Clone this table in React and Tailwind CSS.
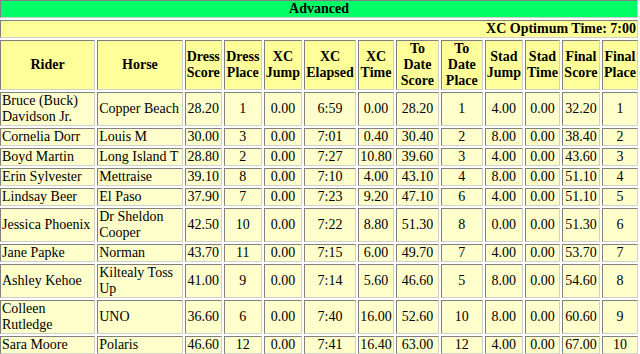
import React from 'react'

const cols = [
  { label: ['Rider'], w: 'w-[96px]', align: 'text-left' },
  { label: ['Horse'], w: 'w-[86px]', align: 'text-left' },
  { label: ['Dress', 'Score'], w: 'w-[37px]' },
  { label: ['Dress', 'Place'], w: 'w-[38px]' },
  { label: ['XC', 'Jump'], w: 'w-[38px]' },
  { label: ['XC', 'Elapsed'], w: 'w-[52px]' },
  { label: ['XC', 'Time'], w: 'w-[36px]' },
  { label: ['To', 'Date', 'Score'], w: 'w-[43px]' },
  { label: ['To', 'Date', 'Place'], w: 'w-[42px]' },
  { label: ['Stad', 'Jump'], w: 'w-[38px]' },
  { label: ['Stad', 'Time'], w: 'w-[35px]' },
  { label: ['Final', 'Score'], w: 'w-[38px]' },
  { label: ['Final', 'Place'], w: 'w-[36px]' },
]

const rows = [
  ['Bruce (Buck) Davidson Jr.', 'Copper Beach', '28.20', '1', '0.00', '6:59', '0.00', '28.20', '1', '4.00', '0.00', '32.20', '1'],
  ['Cornelia Dorr', 'Louis M', '30.00', '3', '0.00', '7:01', '0.40', '30.40', '2', '8.00', '0.00', '38.40', '2'],
  ['Boyd Martin', 'Long Island T', '28.80', '2', '0.00', '7:27', '10.80', '39.60', '3', '4.00', '0.00', '43.60', '3'],
  ['Erin Sylvester', 'Mettraise', '39.10', '8', '0.00', '7:10', '4.00', '43.10', '4', '8.00', '0.00', '51.10', '4'],
  ['Lindsay Beer', 'El Paso', '37.90', '7', '0.00', '7:23', '9.20', '47.10', '6', '4.00', '0.00', '51.10', '5'],
  ['Jessica Phoenix', 'Dr Sheldon Cooper', '42.50', '10', '0.00', '7:22', '8.80', '51.30', '8', '0.00', '0.00', '51.30', '6'],
  ['Jane Papke', 'Norman', '43.70', '11', '0.00', '7:15', '6.00', '49.70', '7', '4.00', '0.00', '53.70', '7'],
  ['Ashley Kehoe', 'Kiltealy Toss Up', '41.00', '9', '0.00', '7:14', '5.60', '46.60', '5', '8.00', '0.00', '54.60', '8'],
  ['Colleen Rutledge', 'UNO', '36.60', '6', '0.00', '7:40', '16.00', '52.60', '10', '8.00', '0.00', '60.60', '9'],
  ['Sara Moore', 'Polaris', '46.60', '12', '0.00', '7:41', '16.40', '63.00', '12', '4.00', '0.00', '67.00', '10'],
]

// old-school table border=1 look: dark top/left, light bottom/right
const cell = 'border border-t-[#808080] border-l-[#808080] border-b-[#d0d0d0] border-r-[#d0d0d0] px-[1px] py-0 align-middle'

export default function App() {
  return (
    <div className="w-[640px] h-[354px] overflow-hidden bg-white text-black font-['Liberation_Serif',serif] text-[14px] leading-[16px]">
      <table className="border-separate border-spacing-[2px] -ml-[2px] -mt-[2px]">
        <tbody>
          <tr>
            <td colSpan={13} className={`${cell} bg-[#00ff66] text-center font-bold`}>Advanced</td>
          </tr>
          <tr>
            <td colSpan={13} className={`${cell} bg-[#ffff99] text-right font-bold`}>XC Optimum Time: 7:00</td>
          </tr>
          <tr>
            {cols.map((c, i) => (
              <th key={i} className={`${cell} ${c.w} bg-[#ffff99] text-center font-bold`}>
                {c.label.map((l, j) => (
                  <div key={j}>{l}</div>
                ))}
              </th>
            ))}
          </tr>
          {rows.map((r, i) => (
            <tr key={i}>
              {r.map((v, j) => (
                <td key={j} className={`${cell} bg-[#ffffcc] ${j < 2 ? 'text-left' : 'text-center'}`}>
                  {v}
                </td>
              ))}
            </tr>
          ))}
        </tbody>
      </table>
    </div>
  )
}
